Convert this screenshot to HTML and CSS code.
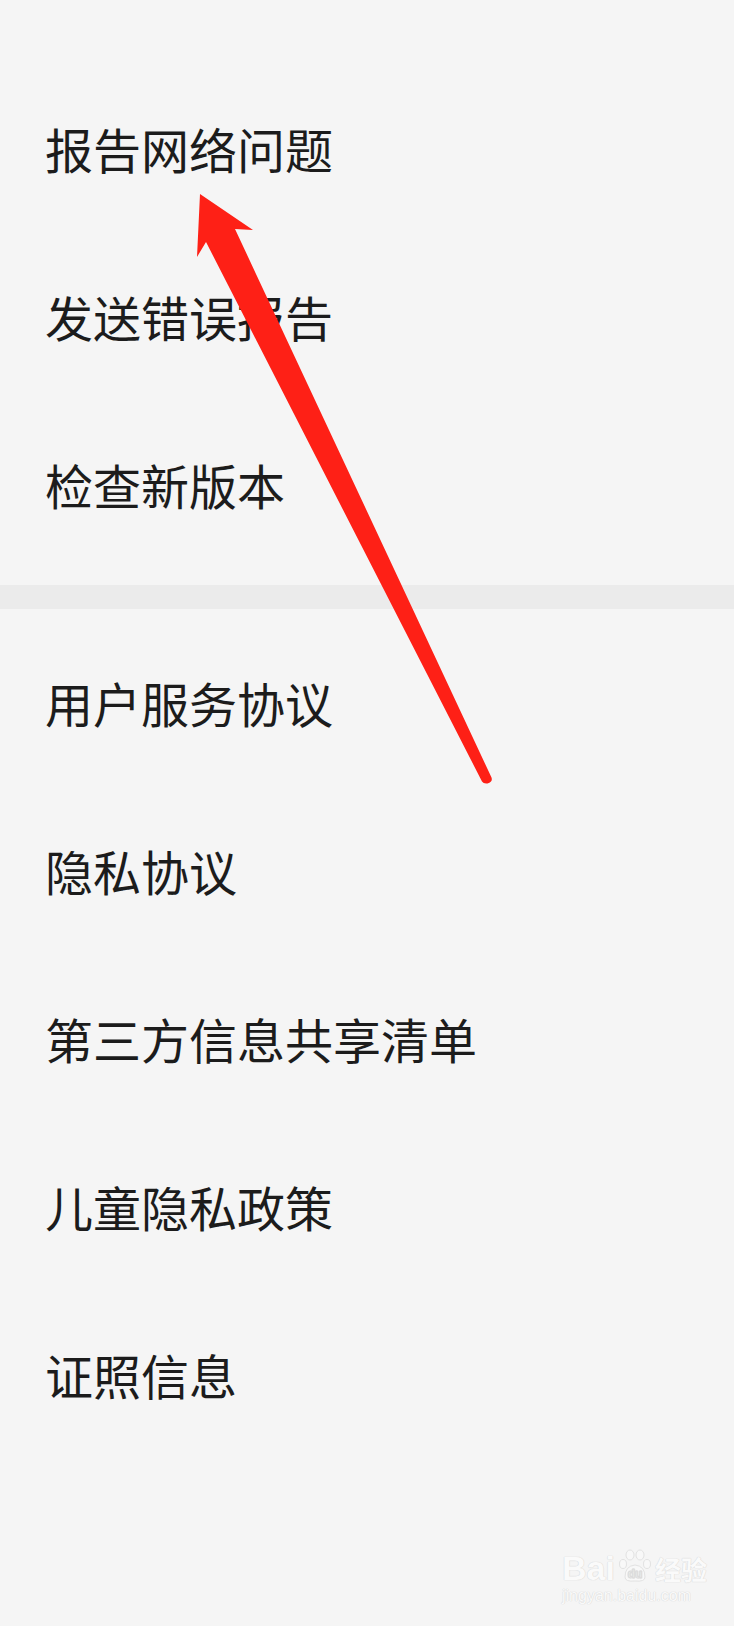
FILE: index.html
```html
<!DOCTYPE html>
<html lang="zh-CN">
<head>
<meta charset="utf-8">
<title>设置</title>
<link rel="stylesheet" href="styles.css">
</head>
<body>
<div class="page">
  <section class="group group-first">
    <div class="item">报告网络问题</div>
    <div class="item">发送错误报告</div>
    <div class="item">检查新版本</div>
  </section>
  <div class="divider"></div>
  <section class="group group-second">
    <div class="item">用户服务协议</div>
    <div class="item">隐私协议</div>
    <div class="item">第三方信息共享清单</div>
    <div class="item">儿童隐私政策</div>
    <div class="item">证照信息</div>
  </section>

  <svg class="arrow" width="734" height="1626" viewBox="0 0 734 1626">
    <path d="M200 194 L253 230 L235 229 L491.5 777.5 Q493 782 487.5 783.5 Q483.5 784 482 781.5 L206 242 L197 257 Z" fill="#fe2016"/>
  </svg>

  <div class="watermark">
    <div class="wm-top">
      <span class="wm-bai">Bai</span>
      <span class="wm-paw">
        <svg width="36" height="36" viewBox="0 0 36 36">
          <g fill="#f8f8f8" stroke="#e2e2e2" stroke-width="1">
            <ellipse cx="6" cy="17" rx="3.5" ry="4.5"/>
            <ellipse cx="13" cy="8" rx="4" ry="5"/>
            <ellipse cx="23" cy="8" rx="4" ry="5"/>
            <ellipse cx="30" cy="17" rx="3.5" ry="4.5"/>
            <path d="M8 30 Q8 19 18 18 Q28 19 28 30 Q28 35 18 34 Q8 35 8 30 Z"/>
          </g>
          <text x="18" y="31" text-anchor="middle" class="wm-du">du</text>
        </svg>
      </span>
      <span class="wm-jy">经验</span>
    </div>
    <div class="wm-url">jingyan.baidu.com</div>
  </div>
</div>
</body>
</html>
```
FILE: styles.css
```css
html, body {
  margin: 0;
  padding: 0;
  background: #f5f5f5;
}
.page {
  position: relative;
  width: 734px;
  height: 1626px;
  overflow: hidden;
  background: #f5f5f5;
  font-family: "Noto Sans CJK SC", "Noto Sans", sans-serif;
  color: #1c1c1c;
}
.group {
  display: flex;
  flex-direction: column;
}
.group-first {
  padding-top: 67px;
}
.group-second {
  padding-top: 12px;
}
.item {
  height: 168px;
  display: flex;
  align-items: center;
  padding-left: 45px;
  padding-bottom: 6px;
  box-sizing: border-box;
  font-size: 48px;
  line-height: 1;
  letter-spacing: 0;
}
.divider {
  margin-top: 14px;
  height: 24px;
  background: #ebebeb;
}
.arrow {
  position: absolute;
  left: 0;
  top: 0;
}
.watermark {
  position: absolute;
  left: 562px;
  top: 1545px;
  display: flex;
  flex-direction: column;
  color: #fafafa;
  text-shadow: 0 0 1px #d6d6d6, 0 0 1px #d6d6d6;
}
.wm-top {
  display: flex;
  align-items: flex-end;
  height: 40px;
}
.wm-bai {
  font-family: "Liberation Sans", sans-serif;
  font-size: 34px;
  font-weight: bold;
  line-height: 1;
}
.wm-paw {
  display: inline-flex;
  margin: 0 2px 2px 2px;
}
.wm-du {
  font-family: "Liberation Sans", sans-serif;
  font-size: 12px;
  font-weight: bold;
  fill: #f8f8f8;
  stroke: #dcdcdc;
  stroke-width: 0.5;
}
.wm-jy {
  font-size: 26px;
  font-weight: bold;
  line-height: 1;
  margin-bottom: 3px;
}
.wm-url {
  font-family: "Liberation Sans", sans-serif;
  font-size: 16px;
  line-height: 18px;
  margin-top: 2px;
}
```
